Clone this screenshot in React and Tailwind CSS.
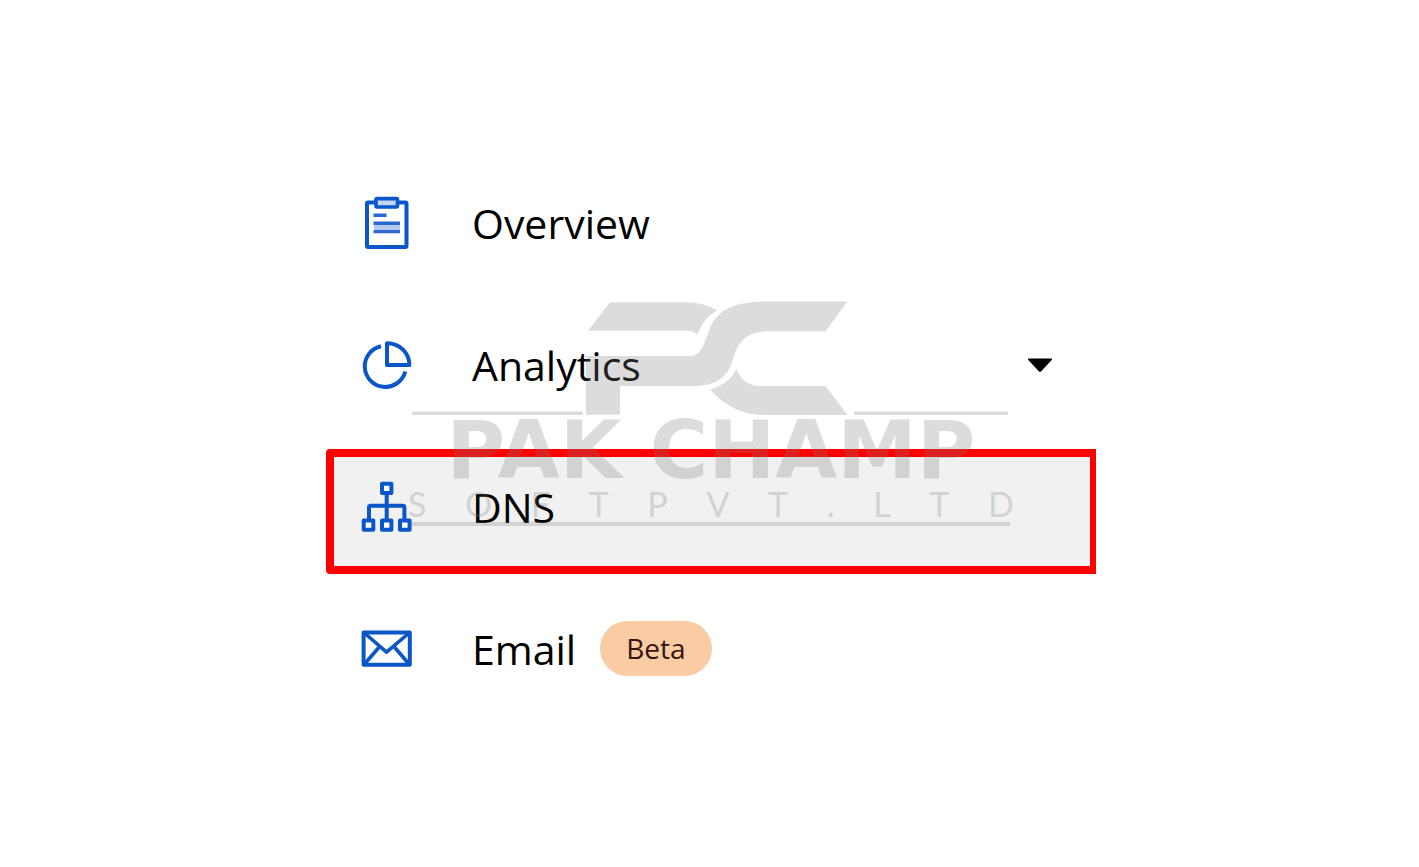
import clsx from 'clsx';

function OverviewIcon() {
  return (
    <svg className="size-[52px] shrink-0 overflow-visible" viewBox="0 0 52 52" fill="none" stroke="#0b56c9" strokeWidth="4" strokeLinejoin="round">
      <rect x="7" y="5.5" width="39.5" height="44.5" rx="1" />
      <rect x="16" y="1.6" width="21.5" height="8.4" rx="1" fill="#c3d6f4" strokeWidth="3.6" />
      <path d="M14 30.4h26" stroke="#b3cbf0" strokeWidth="6" />
      <path d="M13.5 18.2h13M13.5 26.2h26.5M13.5 34.6h26.5" stroke="#2a68cf" strokeWidth="3.4" />
    </svg>
  );
}

function AnalyticsIcon() {
  return (
    <svg className="size-[52px] shrink-0 overflow-visible" viewBox="0 0 52 52" fill="none" stroke="#0b56c9" strokeWidth="4" strokeLinejoin="round">
      <path d="M21 7.200A20.600 20.600 0 1 0 45.300 32.600" />
      <path d="M27 4.200V26h22.400A22 22 0 0 0 27 4.200z" />
    </svg>
  );
}

function DnsIcon() {
  return (
    <svg className="size-[52px] shrink-0 overflow-visible" viewBox="0 0 52 52" fill="none" stroke="#0b56c9" strokeWidth="4" strokeLinejoin="round">
      <path d="M26.7 13v25M9 38V26.4q0-1.6 1.6-1.6h32.2q1.6 0 1.6 1.6V38" />
      <g fill="#fff">
        <rect x="22" y="2.7" width="9.4" height="9.4" />
        <rect x="3.7" y="39.4" width="9.6" height="9.4" />
        <rect x="22" y="39.4" width="9.4" height="9.4" />
        <rect x="40" y="39.4" width="9.6" height="9.4" />
      </g>
    </svg>
  );
}

function EmailIcon() {
  return (
    <svg className="size-[52px] shrink-0 overflow-visible" viewBox="0 0 52 52" fill="none" stroke="#0b56c9" strokeWidth="4" strokeLinejoin="round">
      <rect x="3.6" y="9.6" width="46.2" height="32.2" />
      <path d="M5 10.5l21.5 18.7L48.5 10.5M18.8 24.5L5 40.5M34.8 24.5L48.5 40.5" strokeWidth="3.6" />
    </svg>
  );
}

const items = [
  { label: 'Overview', icon: OverviewIcon },
  { label: 'Analytics', icon: AnalyticsIcon, expandable: true },
  { label: 'DNS', icon: DnsIcon, active: true },
  { label: 'Email', icon: EmailIcon, badge: 'Beta' },
];

function NavItem({ item }) {
  const Icon = item.icon;
  const Tag = item.expandable ? 'button' : 'a';
  const props = item.expandable
    ? { type: 'button', 'aria-expanded': false }
    : { href: `#${item.label.toLowerCase()}`, 'aria-current': item.active ? 'page' : undefined };

  return (
    <Tag
      {...props}
      className={clsx(
        'flex h-[125px] w-full items-center border-8 border-r-[6px] pb-[10px] pl-[26px] pr-[37px] text-left text-[41px] leading-[56px] text-black',
        item.active ? 'rounded-l-[4px] border-[#ff0000] bg-[#f1f1f1]' : 'border-transparent'
      )}
    >
      <Icon />
      <span className="ml-[60px]">{item.label}</span>
      {item.badge && (
        <span className="ml-6 rounded-full bg-[#f9cca4] px-[26px] text-[28px] leading-[55px] text-[#35150f]">
          {item.badge}
        </span>
      )}
      {item.expandable && (
        <svg className="ml-auto h-[14px] w-[26px]" viewBox="0 0 26 14">
          <path d="M1.5.5h23q1 .8 0 1.8L14.2 13.2q-1.2 1-2.4 0L1.5 2.3Q.5 1.3 1.5.5z" />
        </svg>
      )}
    </Tag>
  );
}

// Translucent company logo laid over the menu
function Watermark() {
  return (
    <div className="pointer-events-none absolute inset-x-0 top-[136px] flex flex-col items-center text-[#7d7d7d] opacity-[0.26]">
      <svg className="h-[114px] w-[598px]" viewBox="412 301 598 114" fill="currentColor">
        <path d="M610 302.300H684Q704 302.300 717 310.500Q703 318 697.500 334.500Q694 330.700 687 330.700H588z" />
        <path d="M586 356H690C697 356 701 351 704 344L710 328C718 308 738 301.500 768 301.500H847.500L825.500 331.300H770C750 331.300 740 339 735 353L731 365C725 380 712 386 693 386H620V414.700H586z" />
        <path d="M736.500 369Q743 386 760 386H825.500L847.500 415H763C742 415 725 406 710 389.500Q729 384 736.500 369z" />
        <path d="M412 411.500H583V415H412zM854 411.500H1008V415H854z" />
      </svg>
      <p className="whitespace-nowrap font-['DejaVu_Sans',sans-serif] text-[80px] font-bold leading-[72px]">
        PAK CHAMP
      </p>
      <p className="flex w-[606px] justify-between font-['Lato',sans-serif] text-[34px] leading-[34px]">
        {[...'SOFTPVT.LTD'].map((letter, i) => (
          <span key={i}>{letter}</span>
        ))}
      </p>
      <div className="mt-px h-1 w-[598px] bg-current" />
    </div>
  );
}

export default function App() {
  return (
    <main className="grid min-h-screen grid-cols-[326fr_770fr_323fr] bg-white pt-[165px] pb-[150px] font-['Open_Sans','Noto_Sans',sans-serif]">
      <nav aria-label="Site" className="relative col-start-2">
        <ul className="flex flex-col gap-[17px]">
          {items.map((item) => (
            <li key={item.label}>
              <NavItem item={item} />
            </li>
          ))}
        </ul>
        <Watermark />
      </nav>
    </main>
  );
}
